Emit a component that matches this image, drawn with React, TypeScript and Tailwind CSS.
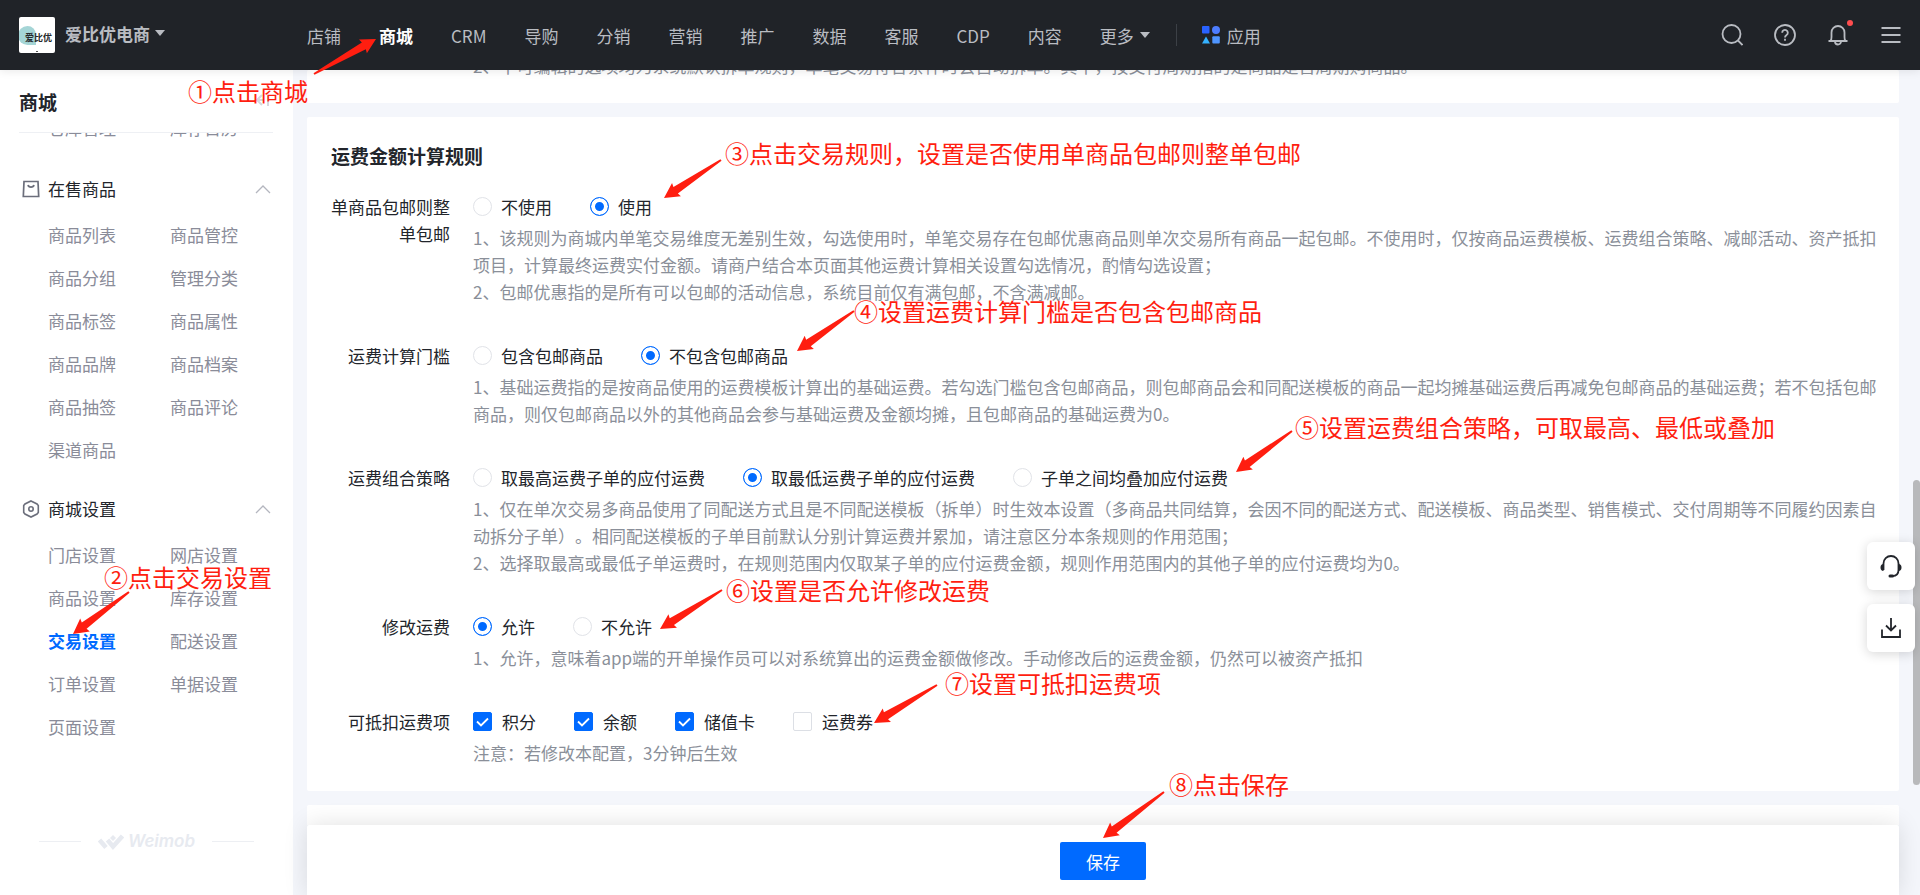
import { useState } from "react";

const navItems = ["店铺", "商城", "CRM", "导购", "分销", "营销", "推广", "数据", "客服", "CDP", "内容"];

const menuGroups = [
    {
        title: "在售商品",
        icon: <BagIcon />,
        items: [
            "商品列表", "商品管控", "商品分组", "管理分类", "商品标签", "商品属性",
            "商品品牌", "商品档案", "商品抽签", "商品评论", "渠道商品",
        ],
    },
    {
        title: "商城设置",
        icon: <HexIcon />,
        items: [
            "门店设置", "网店设置", "商品设置", "库存设置", "交易设置", "配送设置",
            "订单设置", "单据设置", "页面设置",
        ],
    },
];

const radioRows = [
    {
        name: "single",
        label: "单商品包邮则整单包邮",
        options: ["不使用", "使用"],
        initial: "使用",
        help: [
            "1、该规则为商城内单笔交易维度无差别生效，勾选使用时，单笔交易存在包邮优惠商品则单次交易所有商品一起包邮。不使用时，仅按商品运费模板、运费组合策略、减邮活动、资产抵扣项目，计算最终运费实付金额。请商户结合本页面其他运费计算相关设置勾选情况，酌情勾选设置；",
            "2、包邮优惠指的是所有可以包邮的活动信息，系统目前仅有满包邮，不含满减邮。",
        ],
    },
    {
        name: "threshold",
        label: "运费计算门槛",
        options: ["包含包邮商品", "不包含包邮商品"],
        initial: "不包含包邮商品",
        help: [
            "1、基础运费指的是按商品使用的运费模板计算出的基础运费。若勾选门槛包含包邮商品，则包邮商品会和同配送模板的商品一起均摊基础运费后再减免包邮商品的基础运费；若不包括包邮商品，则仅包邮商品以外的其他商品会参与基础运费及金额均摊，且包邮商品的基础运费为0。",
        ],
    },
    {
        name: "combine",
        label: "运费组合策略",
        options: ["取最高运费子单的应付运费", "取最低运费子单的应付运费", "子单之间均叠加应付运费"],
        initial: "取最低运费子单的应付运费",
        help: [
            "1、仅在单次交易多商品使用了同配送方式且是不同配送模板（拆单）时生效本设置（多商品共同结算，会因不同的配送方式、配送模板、商品类型、销售模式、交付周期等不同履约因素自动拆分子单）。相同配送模板的子单目前默认分别计算运费并累加，请注意区分本条规则的作用范围；",
            "2、选择取最高或最低子单运费时，在规则范围内仅取某子单的应付运费金额，规则作用范围内的其他子单的应付运费均为0。",
        ],
    },
    {
        name: "modify",
        label: "修改运费",
        options: ["允许", "不允许"],
        initial: "允许",
        help: ["1、允许，意味着app端的开单操作员可以对系统算出的运费金额做修改。手动修改后的运费金额，仍然可以被资产抵扣"],
    },
];

const deductItems = ["积分", "余额", "储值卡", "运费券"];

// from: arrow tail, to: arrow tip
const notes = [
    { text: "①点击商城", place: "left-[188px] top-[73px]", from: [314, 74], to: [376, 39] },
    { text: "②点击交易设置", place: "left-[104px] top-[559px]", from: [129, 592], to: [73, 634] },
    { text: "③点击交易规则，设置是否使用单商品包邮则整单包邮", place: "left-[725px] top-[135px]", from: [721, 160], to: [664, 198] },
    { text: "④设置运费计算门槛是否包含包邮商品", place: "left-[854px] top-[293px]", from: [854, 311], to: [797, 351] },
    { text: "⑤设置运费组合策略，可取最高、最低或叠加", place: "left-[1295px] top-[409px]", from: [1292, 431], to: [1236, 472] },
    { text: "⑥设置是否允许修改运费", place: "left-[726px] top-[572px]", from: [722, 590], to: [660, 629] },
    { text: "⑦设置可抵扣运费项", place: "left-[945px] top-[665px]", from: [937, 685], to: [874, 723] },
    { text: "⑧点击保存", place: "left-[1169px] top-[766px]", from: [1164, 792], to: [1103, 838] },
];

function BagIcon() {
    return (
        <svg width="18" height="18" viewBox="0 0 18 18" fill="none" stroke="#6b6e7b" strokeWidth="1.7">
            <path d="M2 1.500h14l.7 15H1.300z" />
            <path d="M6 5c.6 2.800 5.400 2.800 6 0" />
        </svg>
    );
}

function HexIcon() {
    return (
        <svg width="18" height="18" viewBox="0 0 18 18" fill="none" stroke="#6b6e7b" strokeWidth="1.6">
            <path d="M9 1l6 3 1.300 1.600v6.800L15 14l-6 3-6-3-1.300-1.600V5.600L3 4z" />
            <circle cx="9" cy="9" r="2.200" />
        </svg>
    );
}

function Header() {
    return (
        <header className="relative z-10 flex h-[70px] shrink-0 items-center bg-[#202328] pr-[18px] pl-[19px] text-[#b9bcc2] shadow-[0_2px_8px_rgba(0,0,0,0.08)]">
            <div className="flex w-[288px] shrink-0 items-center">
                <svg width="36" height="36" viewBox="0 0 36 36" className="mr-[10px]">
                    <rect width="36" height="36" rx="2" fill="#fff" />
                    <path d="M8.500 9A8.500 8.500 0 0 1 17 17.500V28H8.500a9.500 9.500 0 0 1 0-19z" fill="#a5d5d6" />
                    <text x="6" y="24" fontSize="9" fontWeight="700" fill="#26282b" fontFamily="Noto Sans CJK SC">
                        爱比优
                    </text>
                    <path d="M17 34.500h2" stroke="#555" />
                </svg>
                <button className="flex items-center pb-1 font-bold">
                    爱比优电商
                    <span className="ml-[5px] border-x-5 border-t-6 border-x-transparent border-t-current" />
                </button>
            </div>
            <nav className="flex items-center gap-[38px]">
                {navItems.map((item) => (
                    <a key={item} href="#" className={item === "商城" ? "font-bold text-white" : ""}>
                        {item}
                    </a>
                ))}
                <button className="flex items-center">
                    更多
                    <span className="ml-[6px] border-x-5 border-t-6 border-x-transparent border-t-current" />
                </button>
            </nav>
            <div className="mr-[25px] ml-[26px] h-[22px] w-px bg-[#3c4046]" />
            <a href="#" className="flex items-center gap-[7px]">
                <svg width="18" height="18" viewBox="0 0 18 18">
                    <rect x="0" y="0" width="7.500" height="7.500" rx="1" fill="#2962ff" />
                    <circle cx="14" cy="4" r="4" fill="#4d7dff" />
                    <path d="M4 10.500l4 7H0z" fill="#35b2ff" />
                    <rect x="10.300" y="10.200" width="7.500" height="7.300" rx="1" fill="#4f95ff" />
                </svg>
                应用
            </a>
            <div className="ml-auto flex items-center gap-[31px]">
                <button aria-label="搜索">
                    <svg width="22" height="22" viewBox="0 0 22 22" fill="none" stroke="currentColor" strokeWidth="1.800">
                        <circle cx="10.500" cy="10" r="9" />
                        <path d="M17 16.500L21.500 21" />
                    </svg>
                </button>
                <button aria-label="帮助">
                    <svg width="22" height="22" viewBox="0 0 22 22" fill="none" stroke="currentColor" strokeWidth="1.800">
                        <circle cx="11" cy="11" r="10" />
                        <path d="M8.200 8.800a2.800 2.800 0 1 1 4.300 2.300c-1 .7-1.500 1-1.500 2.300" />
                        <path d="M11 14.800v1.900" />
                    </svg>
                </button>
                <button aria-label="消息" className="relative">
                    <svg width="22" height="22" viewBox="0 0 22 22" fill="none" stroke="currentColor" strokeWidth="1.800">
                        <path d="M1.500 17h19M3.500 17c1-1 1-2.500 1-4V8.500a6.500 6.500 0 0 1 13 0V13c0 1.500 0 3 1 4" />
                        <path d="M8 17.500a3 3 0 0 0 6 0" />
                    </svg>
                    <span className="absolute -top-1 -right-1 size-[6px] rounded-full bg-[#ff4d4f]" />
                </button>
                <button aria-label="菜单">
                    <svg width="22" height="22" viewBox="0 0 22 22" stroke="currentColor" strokeWidth="2">
                        <path d="M1.500 4h19M1.500 11h19M1.500 18h19" />
                    </svg>
                </button>
            </div>
        </header>
    );
}

function Sidebar() {
    return (
        <aside className="flex w-[293px] shrink-0 flex-col bg-white text-[#8a8c99]">
            <div className="mr-5 ml-[19px] flex h-[63px] items-center justify-between border-b border-[#eef0f4]">
                <h1 className="text-[19px] font-bold text-[#22252b]">商城</h1>
                <button aria-label="收起">
                    <svg width="18" height="16" viewBox="0 0 18 16" fill="none" stroke="#d5d8de" strokeWidth="2">
                        <path d="M7 2L2 7l5 5M2 7h7M13 3v10" />
                    </svg>
                </button>
            </div>
            <div className="mr-5 ml-12 flex h-2 flex-col justify-end overflow-hidden">
                <div className="grid grid-cols-[122px_1fr]">
                    <a href="#">仓库管理</a>
                    <a href="#">库存日历</a>
                </div>
            </div>
            <nav className="mt-[34px] flex flex-col gap-8">
                {menuGroups.map((group) => (
                    <section key={group.title}>
                        <button className="flex w-full items-center pr-[22px] pl-[22px] text-[#22252b]">
                            {group.icon}
                            <span className="ml-2">{group.title}</span>
                            <svg className="ml-auto" width="16" height="10" viewBox="0 0 16 10" fill="none" stroke="#b4b6bf" strokeWidth="1.300">
                                <path d="M1 9l7-7 7 7" />
                            </svg>
                        </button>
                        <div className="mt-[19px] ml-12 grid grid-cols-[122px_1fr] gap-y-4">
                            {group.items.map((item) => (
                                <a key={item} href="#" className={item === "交易设置" ? "font-bold text-[#006aff]" : ""}>
                                    {item}
                                </a>
                            ))}
                        </div>
                    </section>
                ))}
            </nav>
            <div className="mt-auto mb-10 flex items-center justify-center text-[#e7eaf0]">
                <span className="h-px w-[42px] bg-[#edeff3]" />
                <svg className="mr-1 ml-[17px]" width="26" height="16" viewBox="0 0 26 16" fill="none" stroke="currentColor" strokeWidth="4.500">
                    <path d="M1.500 6l6.500 7.500M9.500 6l5.500 6.500L24.500 2" />
                    <path d="M12 4l3-3 3 3-3 3z" fill="currentColor" stroke="none" />
                </svg>
                <span className="mr-[17px] font-['Inter',sans-serif] font-semibold italic">Weimob</span>
                <span className="h-px w-[42px] bg-[#edeff3]" />
            </div>
        </aside>
    );
}

function FormRow({ label, help, children }: any) {
    return (
        <fieldset className="flex">
            <div className="mr-[23px] w-[119px] shrink-0 text-right">{label}</div>
            <div className="min-w-0 flex-1">
                <div className="flex gap-[38px]">{children}</div>
                <div className="mt-1 text-[#8a8f99]">
                    {help.map((line: string) => (
                        <p key={line}>{line}</p>
                    ))}
                </div>
            </div>
        </fieldset>
    );
}

function RadioRow({ row }: any) {
    const [value, setValue] = useState(row.initial);

    return (
        <FormRow label={row.label} help={row.help}>
            {row.options.map((option: string) => (
                <label key={option} className="flex items-center gap-[9px]">
                    <input
                        type="radio"
                        name={row.name}
                        checked={value === option}
                        onChange={() => setValue(option)}
                        className="size-[19px] appearance-none rounded-full border border-[#e1e3e8] bg-white checked:border-[#006aff] checked:bg-[#006aff] checked:shadow-[inset_0_0_0_4px_#fff]"
                    />
                    {option}
                </label>
            ))}
        </FormRow>
    );
}

function DeductRow() {
    const [checked, setChecked] = useState(["积分", "余额", "储值卡"]);

    const toggle = (item: string) => {
        setChecked(checked.includes(item) ? checked.filter((c) => c !== item) : [...checked, item]);
    };

    return (
        <FormRow label="可抵扣运费项" help={["注意：若修改本配置，3分钟后生效"]}>
            {deductItems.map((item) => (
                <label key={item} className="flex items-center gap-[10px]">
                    <span className="grid size-[19px] place-items-center">
                        <input
                            type="checkbox"
                            checked={checked.includes(item)}
                            onChange={() => toggle(item)}
                            className="col-start-1 row-start-1 size-[19px] appearance-none rounded-xs border border-[#dcdfe5] bg-white checked:border-[#006aff] checked:bg-[#006aff]"
                        />
                        {checked.includes(item) && (
                            <svg className="pointer-events-none z-1 col-start-1 row-start-1" width="13" height="10" viewBox="0 0 13 10" fill="none" stroke="#fff" strokeWidth="1.800">
                                <path d="M1 4.500l4 4L12 1.500" />
                            </svg>
                        )}
                    </span>
                    {item}
                </label>
            ))}
        </FormRow>
    );
}

function Notes() {
    return (
        <div className="pointer-events-none absolute inset-0 z-20 text-2xl leading-9 text-[#ff1e10]">
            <svg className="absolute inset-0 size-full" fill="currentColor">
                {notes.map(({ text, from, to }) => {
                    const dx = to[0] - from[0];
                    const dy = to[1] - from[1];
                    const len = Math.hypot(dx, dy);
                    const angle = (Math.atan2(dy, dx) * 180) / Math.PI;
                    return (
                        <path
                            key={text}
                            transform={`translate(${to[0]} ${to[1]}) rotate(${angle})`}
                            d={`M0 0L-15 -8L-14 -4L${-len} -1V1L-14 4L-15 8Z`}
                        />
                    );
                })}
            </svg>
            {notes.map((note) => (
                <span key={note.text} className={`absolute whitespace-nowrap ${note.place}`}>
                    {note.text}
                </span>
            ))}
        </div>
    );
}

export default function App() {
    return (
        <div className="relative flex h-screen flex-col overflow-hidden bg-[#f4f6fb] font-['Noto_Sans_CJK_SC',sans-serif] text-[17px] leading-[27px] text-[#22252b] [text-spacing-trim:space-all]">
            <Header />
            <div className="flex min-h-0 flex-1">
                <Sidebar />
                <main className="flex min-w-0 flex-1 flex-col pr-[21px] pl-[14px]">
                    <div className="mb-[14px] flex h-[33px] shrink-0 flex-col justify-end overflow-hidden rounded-xs bg-white pr-6 pb-6 pl-[166px] text-[#8a8f99]">
                        <p>2、不可编辑的选项均为系统默认拆单规则，单笔交易符合条件时会自动拆单。其中，按交付周期指的是商品是否周期购商品。</p>
                    </div>
                    <form className="shrink-0 rounded-xs bg-white pt-[25px] pr-5 pb-[25px] pl-6">
                        <h2 className="mb-6 text-[19px] font-bold">运费金额计算规则</h2>
                        <div className="flex flex-col gap-[37px]">
                            {radioRows.map((row) => (
                                <RadioRow key={row.name} row={row} />
                            ))}
                            <DeductRow />
                        </div>
                    </form>
                    <div className="mt-[14px] flex-1 rounded-t-xs bg-white" />
                    <footer className="flex shrink-0 justify-center rounded-t-xs bg-white pt-[17px] pb-[15px] shadow-[0_0_24px_rgba(0,0,0,0.12)]">
                        <button className="h-[38px] w-[86px] rounded-xs bg-[#006aff] text-white">保存</button>
                    </footer>
                </main>
            </div>

            <div className="absolute top-[480px] right-0 h-[305px] w-[7px] rounded-full bg-[#b8b9bb]" />
            <div className="absolute top-[542px] right-[5px] flex flex-col gap-[14px]">
                <button aria-label="客服" className="grid size-12 place-items-center rounded-md bg-white shadow-[0_2px_12px_rgba(0,0,0,0.16)]">
                    <svg width="22" height="24" viewBox="0 0 22 24" fill="none" stroke="#22252b" strokeWidth="1.800">
                        <path d="M3.500 16V9.500a7.500 7.500 0 0 1 15 0V16c0 3.500-2 6-6 6" />
                        <path d="M3.500 10v7C1.500 17 .5 15.500 .5 13.500S1.500 10 3.500 10zM18.500 10v7c2 0 3-1.500 3-3.500s-1-3.500-3-3.500z" fill="#22252b" stroke="none" />
                        <rect x="8.500" y="20.500" width="5.500" height="3" rx="1.500" fill="#22252b" stroke="none" />
                    </svg>
                </button>
                <button aria-label="下载" className="grid size-12 place-items-center rounded-md bg-white shadow-[0_2px_12px_rgba(0,0,0,0.16)]">
                    <svg width="20" height="20" viewBox="0 0 20 20" fill="none" stroke="#22252b" strokeWidth="1.800">
                        <path d="M10 0v12M5 7.500l5 5 5-5M1 11.500V19h18v-7.500" />
                    </svg>
                </button>
            </div>
            <Notes />
        </div>
    );
}
